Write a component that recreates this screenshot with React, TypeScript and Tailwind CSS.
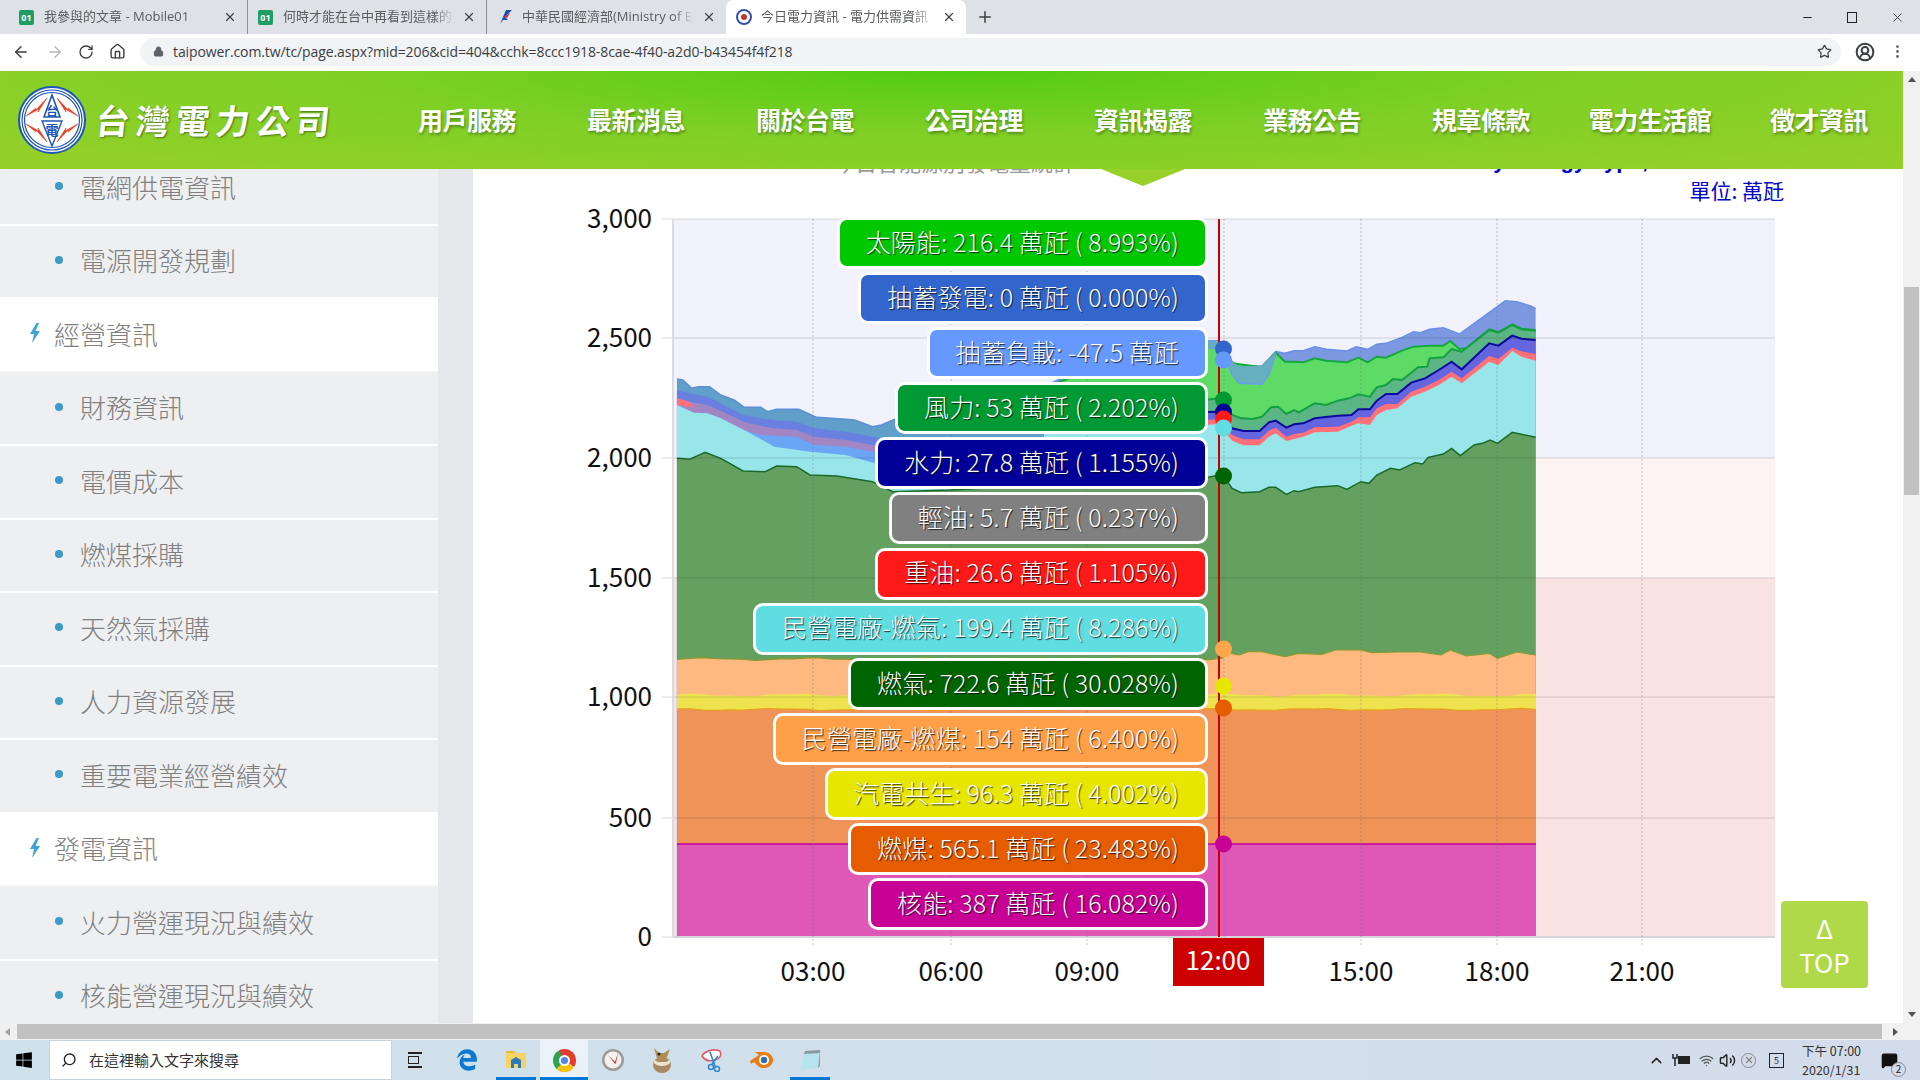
import React from 'react';
import { FaWindows, FaEdgeLegacy } from 'react-icons/fa';
import { ArrowLeft, ArrowRight, RotateCw, Home, Lock, Star, EllipsisVertical, CircleUserRound, X, Plus, Minus, Search, ChevronUp, Volume2, Wifi, MessageSquare } from 'lucide-react';

type Pts = number[][];

// coordinates read off the reference crops
const rx = (p: Pts): Pts => p.map(([x, y]) => [1200 + x / 2.178, 280 + y / 3]);
const lx = (p: Pts): Pts => p.map(([x, y]) => [560 + x / 2.24, 170 + y / 3]);
const wave = (base: number, amp: number, seed: number): Pts => {
  const out: Pts = [];
  for (let x = 677; x <= 1536; x += 13) {
    out.push([x, base + amp * Math.sin(x / 17 + seed) + (amp / 2) * Math.sin(x / 6 + seed)]);
  }
  out.push([1536, base]);
  return out;
};
const area = (p: Pts) => `M${p[0][0]},937 ` + p.map(([x, y]) => `L${x},${y}`).join(' ') + ` L${p[p.length - 1][0]},937 Z`;
const line = (p: Pts) => p.map(([x, y]) => `${x},${y}`).join(' ');

const leftTop = [...lx([[262, 627], [275, 630], [295, 655], [310, 650], [335, 650], [360, 675], [390, 690], [413, 712], [450, 712], [465, 725], [485, 718], [535, 718], [575, 742], [640, 748], [660, 750], [700, 770], [720, 765], [750, 748]]), [960, 415], [1044, 415]];
const left2 = [...lx([[262, 660], [290, 670], [330, 680], [360, 700], [410, 735], [450, 745], [480, 750], [530, 755], [570, 775], [640, 785], [700, 800], [760, 815], [980, 800]]), [1044, 440]];
const left3 = [...lx([[262, 685], [290, 695], [330, 705], [360, 722], [410, 755], [450, 768], [480, 775], [530, 780], [570, 800], [640, 810], [700, 825], [760, 835], [980, 805]]), [1044, 445]];
const left4 = [...lx([[262, 705], [300, 728], [330, 730], [360, 745], [410, 780], [450, 795], [480, 797], [530, 800], [570, 825], [640, 830], [700, 845], [760, 850], [980, 815]]), [1044, 450]];
const left5 = [...lx([[262, 705], [300, 728], [330, 730], [360, 745], [420, 785], [480, 830], [560, 845], [640, 855], [705, 880]]), [1044, 465]];

const topP = [[1044, 386], [1100, 362], [1150, 348], [1205, 341], ...rx([[18, 182], [40, 182], [70, 245], [85, 258], [135, 258], [165, 215], [185, 220], [205, 212], [225, 212], [250, 200], [275, 208], [320, 213], [340, 200], [365, 208], [385, 193], [405, 190], [440, 172], [465, 155], [480, 158], [500, 148], [530, 143], [565, 162], [665, 62], [690, 65], [720, 78], [731, 85]])];
const solar = [[1044, 388], [1100, 366], [1150, 352], [1205, 345], ...rx([[40, 192], [70, 250], [135, 262], [165, 218], [185, 245], [205, 245], [225, 247], [250, 235], [275, 242], [320, 247], [345, 233], [365, 247], [385, 230], [405, 233], [440, 212], [465, 200], [500, 197], [530, 197], [545, 183], [565, 207], [580, 205], [630, 148], [650, 156], [680, 133], [700, 146], [731, 150]])];
const pumpBottom = rx([[18, 205], [40, 205], [60, 245], [70, 285], [85, 310], [135, 313], [150, 285], [165, 222]]);
const pumpTop = rx([[18, 182], [40, 182], [70, 245], [85, 258], [135, 258], [165, 215]]);
const wind = [[1044, 426], [1205, 400], ...rx([[40, 355], [70, 405], [90, 415], [115, 417], [135, 410], [155, 382], [170, 380], [188, 402], [205, 390], [215, 397], [250, 370], [275, 375], [300, 362], [325, 355], [345, 343], [370, 350], [385, 322], [405, 315], [420, 297], [440, 300], [475, 262], [495, 260], [500, 235], [530, 232], [548, 207], [570, 215], [630, 150], [650, 158], [680, 135], [700, 148], [731, 152]])];
const hydro = [[1044, 428], [1205, 412], ...rx([[40, 395], [70, 445], [95, 453], [130, 453], [150, 427], [165, 422], [188, 443], [205, 433], [225, 430], [250, 415], [300, 407], [330, 405], [345, 388], [370, 388], [385, 362], [405, 342], [430, 342], [460, 308], [490, 295], [520, 270], [548, 245], [570, 268], [630, 190], [650, 197], [680, 167], [700, 176], [731, 180]])];
const oil = [[1044, 429], [1205, 420], ...rx([[40, 418], [70, 465], [95, 478], [130, 478], [150, 452], [165, 443], [188, 470], [205, 462], [225, 458], [250, 442], [300, 440], [330, 425], [345, 412], [370, 412], [385, 385], [405, 372], [430, 372], [460, 335], [490, 320], [520, 300], [548, 275], [570, 295], [630, 228], [650, 236], [680, 203], [700, 214], [731, 222]])];
const ippGas = [[1044, 430], [1205, 425], ...rx([[40, 432], [70, 482], [95, 496], [130, 496], [150, 470], [165, 460], [188, 483], [205, 477], [225, 470], [250, 457], [300, 455], [330, 437], [345, 430], [370, 435], [385, 405], [405, 390], [430, 385], [460, 350], [490, 335], [520, 315], [548, 290], [570, 310], [630, 245], [650, 255], [680, 213], [700, 230], [731, 242]])];
const gas = [...lx([[262, 865], [290, 868], [325, 847], [360, 865], [410, 903], [460, 905], [485, 888], [530, 890], [560, 915], [620, 918], [700, 935], [745, 965]]), [950, 490], [1040, 485], [1205, 478], ...rx([[40, 585], [60, 605], [70, 625], [90, 638], [130, 635], [150, 622], [165, 622], [188, 643], [205, 632], [215, 635], [250, 622], [300, 617], [320, 628], [350, 605], [368, 610], [385, 585], [415, 565], [435, 570], [468, 548], [485, 552], [497, 532], [530, 522], [548, 505], [567, 527], [597, 495], [615, 490], [632, 480], [648, 490], [680, 457], [731, 472]])];
const ippCoal = [...wave(659, 1, 1).filter((p) => p[0] < 1225), ...rx([[50, 1115], [85, 1125], [105, 1115], [135, 1115], [185, 1130], [215, 1120], [265, 1123], [295, 1110], [350, 1110], [375, 1118], [430, 1116], [480, 1116], [525, 1125], [545, 1110], [580, 1128], [630, 1120], [648, 1135], [690, 1116], [731, 1125]])];

const tips = [
  { t: '太陽能: 216.4 萬瓩 ( 8.993%)', c: 'bg-[#00c800]' },
  { t: '抽蓄發電: 0 萬瓩 ( 0.000%)', c: 'bg-[#3366cc]' },
  { t: '抽蓄負載: -47.5 萬瓩', c: 'bg-[#6699ff]' },
  { t: '風力: 53 萬瓩 ( 2.202%)', c: 'bg-[#009933]' },
  { t: '水力: 27.8 萬瓩 ( 1.155%)', c: 'bg-[#000099]' },
  { t: '輕油: 5.7 萬瓩 ( 0.237%)', c: 'bg-[#808080]' },
  { t: '重油: 26.6 萬瓩 ( 1.105%)', c: 'bg-[#ff1a1a]' },
  { t: '民營電廠-燃氣: 199.4 萬瓩 ( 8.286%)', c: 'bg-[#5fdde0]' },
  { t: '燃氣: 722.6 萬瓩 ( 30.028%)', c: 'bg-[#006400]' },
  { t: '民營電廠-燃煤: 154 萬瓩 ( 6.400%)', c: 'bg-[#ff9f47]' },
  { t: '汽電共生: 96.3 萬瓩 ( 4.002%)', c: 'bg-[#e6e600]' },
  { t: '燃煤: 565.1 萬瓩 ( 23.483%)', c: 'bg-[#e65c00]' },
  { t: '核能: 387 萬瓩 ( 16.082%)', c: 'bg-[#c70096]' }
];

const dots = [
  [349, '#3366cc'], [360, '#6699ff'], [400, '#009933'], [412, '#000099'], [419, '#ff1a1a'], [428, '#5fdde0'],
  [476, '#006400'], [649, '#ffa64d'], [686, '#e6e600'], [708, '#e65c00'], [844, '#c70096']
] as [number, string][];

const yTicks = [[3000, '3,000', 219], [2500, '2,500', 338], [2000, '2,000', 458], [1500, '1,500', 578], [1000, '1,000', 697], [500, '500', 818], [0, '0', 937]] as [number, string, number][];
const xTicks = [[813, '03:00'], [951, '06:00'], [1087, '09:00'], [1361, '15:00'], [1497, '18:00'], [1642, '21:00']] as [number, string][];

const menu = [
  { t: '電網供電資訊' }, { t: '電源開發規劃' }, { t: '經營資訊', top: true }, { t: '財務資訊' }, { t: '電價成本' }, { t: '燃煤採購' },
  { t: '天然氣採購' }, { t: '人力資源發展' }, { t: '重要電業經營績效' }, { t: '發電資訊', top: true }, { t: '火力營運現況與績效' }, { t: '核能營運現況與績效' }
];

const nav = ['用戶服務', '最新消息', '關於台電', '公司治理', '資訊揭露', '業務公告', '規章條款', '電力生活館', '徵才資訊'];

function Mobile01Icon() {
  return (
    <span className="flex h-[15px] w-[15px] flex-none items-center justify-center rounded-[2px] bg-[#1f9d63] text-[9px] font-bold leading-none text-white">01</span>
  );
}

function Tab({ icon, title, active, last }: { icon: React.ReactNode; title: string; active?: boolean; last?: boolean }) {
  return (
    <div className={active ? 'flex h-[34px] w-[240px] items-center rounded-t-[8px] bg-white pl-[10px] pr-[10px]' : last ? 'flex h-[34px] w-[239px] items-center pl-[10px] pr-[10px]' : 'flex h-[34px] w-[239px] items-center border-r border-[#8f9296] pl-[10px] pr-[10px]'}>
      <span className="flex w-[25px] flex-none items-center">{icon}</span>
      <span className="min-w-0 flex-1 overflow-hidden whitespace-nowrap text-[13px] text-[#5a5c60] [mask-image:linear-gradient(to_right,black_88%,transparent)]">{title}</span>
      <X size={14} strokeWidth={2} className="ml-[8px] flex-none text-[#3c4043]" />
    </div>
  );
}

function Logo() {
  return (
    <svg width="68" height="68" viewBox="0 0 68 68" className="flex-none">
      <circle cx="34" cy="34" r="33" fill="#fff" stroke="#1d55b8" strokeWidth="2" />
      <circle cx="34" cy="34" r="30" fill="none" stroke="#1d55b8" strokeWidth="1.2" />
      <circle cx="34" cy="34" r="27.5" fill="none" stroke="#1d55b8" strokeWidth="1.2" />
      <path d="M8 30l10-8-1 3 12-13-9 14 1-3zM60 30l-10-8 1 3-12-13 9 14-1-3zM8 38l10 8-1-3 12 13-9-14 1 3zM60 38l-10 8 1-3-12 13 9-14-1 3z" fill="#ea3a1e" stroke="#ea3a1e" strokeWidth="0.6" />
      <path d="M34 9l-8 22h16z" fill="none" stroke="#1d55b8" strokeWidth="1.6" />
      <text x="34" y="30" textAnchor="middle" fontSize="12" fontWeight="700" fill="#1d55b8">台</text>
      <path d="M24 35h20l-10 25z" fill="#fff" stroke="#1d55b8" strokeWidth="1.4" />
      <text x="34" y="49" textAnchor="middle" fontSize="13" fontWeight="700" fill="#1d55b8">電</text>
    </svg>
  );
}

function Chart() {
  return (
    <svg width="1430" height="854" viewBox="473 169 1430 854" className="block font-['Noto_Sans_CJK_TC','Liberation_Sans',sans-serif]">
      <rect x="673" y="219" width="1102" height="239" fill="#f1f2fb" />
      <rect x="673" y="458" width="1102" height="120" fill="#fdf3f3" />
      <rect x="673" y="578" width="1102" height="359" fill="#f9e3e3" />

      <path d={area(leftTop)} fill="#5f9fca" />
      <polyline points={line(leftTop)} fill="none" stroke="#5b8fd8" strokeWidth="1.5" />
      <path d={area(left2)} fill="#6a80e0" />
      <path d={area(left3)} fill="#a286c4" />
      <path d={area(lx([[262, 685], [290, 695], [300, 712], [262, 705]]))} fill="#ff7078" />
      <path d={area(left4)} fill="#6ba5f5" />
      <path d={area(left5)} fill="#98e6ea" />

      <path d={area(topP)} fill="#7b98e0" />
      <polyline points={line(topP)} fill="none" stroke="#6a8fe6" strokeWidth="1.5" />
      <path d={area(solar)} fill="#5edb66" />
      <polyline points={line(solar)} fill="none" stroke="#16a83e" strokeWidth="2" />
      <polygon points={line([...pumpTop, ...[...pumpBottom].reverse()])} fill="#66afc0" />
      <polyline points={line(pumpBottom)} fill="none" stroke="#6a9fe8" strokeWidth="1.5" />
      <path d={area(wind)} fill="#5cb585" />
      <polyline points={line(wind)} fill="none" stroke="#12a040" strokeWidth="2" />
      <path d={area(hydro)} fill="#6565e0" />
      <polyline points={line(hydro)} fill="none" stroke="#0a0a9a" strokeWidth="2" />
      <path d={area(oil)} fill="#ff7078" />
      <path d={area(ippGas)} fill="#98e6ea" />

      <path d={area(gas)} fill="#64a060" />
      <polyline points={line(gas)} fill="none" stroke="#1a6a2a" strokeWidth="1.5" />
      <path d={area(ippCoal)} fill="#fdb97f" />
      <polyline points={line(ippCoal)} fill="none" stroke="#8a9a30" strokeWidth="1.2" />
      <path d={area(wave(695, 1.2, 2))} fill="#eee34f" />
      <path d={area(wave(709.5, 0.8, 3))} fill="#ef9358" />
      <polyline points={line(wave(709.5, 0.8, 3))} fill="none" stroke="#e8a020" strokeWidth="1.2" />
      <rect x="677" y="844" width="859" height="93" fill="#e058b6" />
      <line x1="677" y1="844" x2="1536" y2="844" stroke="#c000a0" strokeWidth="1.5" />

      {yTicks.map(([v, label, y]) => (
        <g key={v}>
          <line x1="662" y1={y} x2="1775" y2={y} stroke="#000" strokeOpacity="0.07" strokeWidth="2" />
          <text x="652" y={y + 9} textAnchor="end" fontSize="26" fill="#111">{label}</text>
        </g>
      ))}
      <line x1="673" y1="219" x2="673" y2="937" stroke="#dcdce0" strokeWidth="2" />
      <line x1="673" y1="937" x2="1775" y2="937" stroke="#d6d6da" strokeWidth="2" />
      {[813, 951, 1087, 1224, 1361, 1497, 1642].map((x) => (
        <line key={x} x1={x} y1="219" x2={x} y2="945" stroke="#6b6b80" strokeOpacity="0.4" strokeWidth="1" strokeDasharray="2 2" />
      ))}
      {xTicks.map(([x, label]) => (
        <text key={x} x={x} y="981" textAnchor="middle" fontSize="26" fill="#111">{label}</text>
      ))}

      <line x1="1219" y1="219" x2="1219" y2="937" stroke="#c40000" strokeWidth="2" />
      {dots.map(([y, c]) => (
        <circle key={y} cx="1223.5" cy={y} r="8.5" fill={c} />
      ))}
      <rect x="1173" y="938" width="91" height="48" fill="#cc0000" />
      <text x="1218" y="970" textAnchor="middle" fontSize="26" fill="#fff">12:00</text>
    </svg>
  );
}

export default function App() {
  return (
    <div className="flex h-screen w-screen flex-col overflow-hidden bg-white font-['Noto_Sans_CJK_TC','Liberation_Sans',sans-serif]">
      {/* browser tabs */}
      <div className="relative flex h-[34px] flex-none items-end bg-[#dee1e6] pl-[9px] font-['Open_Sans','Noto_Sans_CJK_TC',sans-serif]">
        <Tab icon={<Mobile01Icon />} title="我參與的文章 - Mobile01" />
        <Tab icon={<Mobile01Icon />} title="何時才能在台中再看到這樣的藍天" />
        <Tab
          icon={
            <svg width="16" height="16" viewBox="0 0 16 16">
              <path d="M3 15L9 1h6L8 8l3 3H6z" fill="#1a4fb0" />
              <path d="M7 8l6-4-3 5z" fill="#e0262b" />
            </svg>
          }
          title="中華民國經濟部(Ministry of Economic"
          last
        />
        <Tab
          icon={
            <svg width="16" height="16" viewBox="0 0 16 16">
              <circle cx="8" cy="8" r="7" fill="#fff" stroke="#3a4fa8" strokeWidth="2" />
              <circle cx="8" cy="8" r="3" fill="#c0392b" />
            </svg>
          }
          title="今日電力資訊 - 電力供需資訊 - 台灣電力公司"
          active
        />
        <Plus size={18} className="ml-[10px] mb-[8px] text-[#3c4043]" />
        <div className="ml-auto flex h-[34px] items-center">
          <Minus size={13} className="mr-[33px] text-[#222]" />
          <span className="mr-[33px] h-[11px] w-[10px] border border-[#222]" />
          <X size={15} strokeWidth={1.2} className="mr-[15px] text-[#222]" />
        </div>
      </div>

      {/* browser toolbar */}
      <div className="flex h-[37px] flex-none items-center bg-white pb-[2px] font-['Open_Sans','Noto_Sans_CJK_TC',sans-serif]">
        <ArrowLeft size={18} strokeWidth={2} className="ml-[12px] text-[#3c4043]" />
        <ArrowRight size={18} strokeWidth={2} className="ml-[16px] text-[#b4b7bb]" />
        <RotateCw size={16} strokeWidth={2} className="ml-[14px] text-[#3c4043]" />
        <Home size={17} strokeWidth={2} className="ml-[15px] text-[#3c4043]" />
        <div className="ml-[14px] flex h-[28px] w-[1701px] items-center rounded-full bg-[#f1f3f4] pl-[13px] pr-[9px]">
          <Lock size={11} fill="#5f6368" className="text-[#5f6368]" />
          <span className="ml-[9px] whitespace-nowrap text-[14px] tracking-[-0.1px] text-[#3c4043]">taipower.com.tw/tc/page.aspx?mid=206&amp;cid=404&amp;cchk=8ccc1918-8cae-4f40-a2d0-b43454f4f218</span>
          <Star size={15} className="ml-auto text-[#3c4043]" />
        </div>
        <CircleUserRound size={20} strokeWidth={2.4} className="ml-[14px] text-[#3c4043]" />
        <EllipsisVertical size={17} className="ml-[14px] text-[#5f6368]" />
      </div>

      <div className="flex min-h-0 flex-1">
        <div className="flex min-w-0 flex-1 flex-col">
          {/* site header */}
          <div className="relative z-10 flex h-[98px] flex-none items-center bg-[radial-gradient(ellipse_at_50%_0%,#52cc14_0%,#7fd026_45%,#96d028_100%)]">
            <div className="flex w-[382.5px] flex-none items-center pl-[18px]">
              <Logo />
              <span className="ml-[10px] -skew-x-6 whitespace-nowrap text-[34px] font-bold leading-none tracking-[6px] text-white [text-shadow:1px_1px_2px_rgba(0,0,0,0.45)]">台灣電力公司</span>
            </div>
            <div className="grid grid-cols-[repeat(9,169px)]">
              {nav.map((n, i) => (
                <div key={n} className="relative flex justify-center whitespace-nowrap text-[25px] font-bold tracking-[-0.5px] text-white [text-shadow:1px_2px_3px_rgba(0,0,0,0.35)]">
                  {n}
                  {i === 4 && <span className="absolute left-1/2 top-[calc(100%+30px)] h-0 w-0 -translate-x-1/2 border-x-[42px] border-t-[17px] border-x-transparent border-t-[#98d02a]" />}
                </div>
              ))}
            </div>
          </div>

          <div className="flex min-h-0 flex-1">
            {/* side menu */}
            <div className="w-[438px] flex-none overflow-hidden bg-[#eeeff0]">
              <div className="-mt-[17px]">
                {menu.map((m) =>
                  m.top ? (
                    <div key={m.t} className="flex h-[73.5px] items-center border-b-[2px] border-[#f4f4f5] bg-white pb-[3px] pl-[29px] text-[26px] font-light text-[#808080]">
                      <svg width="12" height="20" viewBox="0 0 12 20" className="flex-none">
                        <path d="M7.5 0L1 11h4L3 20l8-12H6.500L10 0z" fill="#3ba3d8" />
                      </svg>
                      <span className="ml-[13px]">{m.t}</span>
                    </div>
                  ) : (
                    <div key={m.t} className="flex h-[73.5px] items-center border-b-[2px] border-white pb-[3px] pl-[55px] text-[26px] font-light text-[#808080]">
                      <span className="h-[8px] w-[8px] flex-none rounded-full bg-[#3b9ac9]" />
                      <span className="ml-[17px] whitespace-nowrap">{m.t}</span>
                    </div>
                  )
                )}
              </div>
            </div>
            <div className="w-[35px] flex-none bg-[#e6e7ea]" />

            {/* chart panel */}
            <div className="relative min-w-0 flex-1 overflow-hidden">
              <div className="-mt-[19px] flex h-[22px] items-center justify-between whitespace-nowrap pl-[360px] pr-[255px] text-[22px] leading-none">
                <span className="text-[#999]">今日各能源別發電量統計</span>
                <span className="font-['Liberation_Sans',sans-serif] font-bold text-[#0000cc]">by Energy Type,</span>
              </div>
              <div className="absolute left-0 top-0">
                <Chart />
              </div>
              <div className="absolute right-[119px] top-[6px] text-[21px] text-[#0000cc]">單位: 萬瓩</div>
              <div className="absolute right-[695px] top-[48px] flex flex-col items-end gap-[3.1px]">
                {tips.map((tip) => (
                  <div key={tip.t} className={`flex h-[52px] items-center whitespace-nowrap rounded-[10px] border-[3px] border-white px-[26px] pb-[3px] text-[25px] font-light tracking-[0.1px] text-white [text-shadow:1px_1px_1px_rgba(0,0,0,0.75)] ${tip.c}`}>
                    {tip.t}
                  </div>
                ))}
              </div>
              <div className="absolute left-[1308px] top-[732px] flex h-[87px] w-[87px] flex-col items-center justify-center rounded-[4px] bg-[#b0d94a] text-[26px] leading-[34px] text-white">
                <span>Δ</span>
                <span>TOP</span>
              </div>
            </div>
          </div>
        </div>

        {/* vertical scrollbar */}
        <div className="flex w-[17px] flex-none flex-col items-center bg-[#f1f1f1]">
          <span className="mt-[6px] h-0 w-0 border-x-[4px] border-b-[5px] border-x-transparent border-b-[#505050]" />
          <div className="mt-[205px] h-[208px] w-[15px] bg-[#c1c1c1]" />
          <span className="mb-[6px] mt-auto h-0 w-0 border-x-[4px] border-t-[5px] border-x-transparent border-t-[#505050]" />
        </div>
      </div>

      {/* horizontal scrollbar */}
      <div className="flex h-[17px] flex-none items-center bg-[#f1f1f1]">
        <span className="ml-[5px] h-0 w-0 border-y-[4px] border-r-[5px] border-y-transparent border-r-[#a0a0a0]" />
        <div className="ml-[7px] h-[15px] w-[1865px] bg-[#c1c1c1]" />
        <span className="ml-[11px] h-0 w-0 border-y-[4px] border-l-[5px] border-y-transparent border-l-[#505050]" />
      </div>

      {/* windows taskbar */}
      <div className="flex h-[40px] flex-none items-center bg-gradient-to-r from-[#cfe2ec] to-[#d3dcea] font-['Noto_Sans_CJK_TC',sans-serif] text-[#222]">
        <FaWindows size={18} className="ml-[15px] flex-none text-black" />
        <div className="ml-[16px] flex h-[40px] w-[343px] flex-none items-center border border-[#c9d3da] bg-white pl-[11px] text-[15px] text-[#333]">
          <Search size={16} className="-scale-x-100 text-[#222]" />
          <span className="ml-[12px]">在這裡輸入文字來搜尋</span>
        </div>
        <div className="ml-[16px] flex h-[16px] w-[16px] flex-none flex-col justify-between">
          <span className="h-[2px] w-[14px] bg-[#222]" />
          <span className="h-[8px] w-[11px] border border-[#222]" />
          <span className="h-[2px] w-[14px] bg-[#222]" />
        </div>
        <div className="ml-[18px] flex h-[40px] w-[49px] flex-none items-center justify-center">
          <FaEdgeLegacy size={22} className="text-[#0c78d0]" />
        </div>
        <div className="flex h-[40px] w-[49px] flex-none justify-center">
          <div className="flex w-[40px] items-center justify-center border-b-[3px] border-[#0078d7] pt-[3px]">
            <svg width="22" height="20" viewBox="0 0 22 20">
              <path d="M1 1h8l2 2H1z" fill="#e8b83a" />
              <path d="M1 3h20v15H1z" fill="#f6d365" />
              <path d="M6 10l5-3 5 3v8h-3v-4H9v4H6z" fill="#2a7bb8" />
            </svg>
          </div>
        </div>
        <div className="flex h-[40px] w-[48px] flex-none items-center justify-center border-b-[3px] border-[#0078d7] bg-[#e8f2f8] pt-[3px]">
          <span className="flex h-[23px] w-[23px] items-center justify-center rounded-full bg-[conic-gradient(#e33b2e_0_34%,#f4c20d_34%_62%,#30a14e_62%_92%,#e33b2e_92%_100%)]">
            <span className="h-[11px] w-[11px] rounded-full border-2 border-white bg-[#4f87ec]" />
          </span>
        </div>
        <div className="flex h-[40px] w-[49px] flex-none items-center justify-center">
          <svg width="24" height="24" viewBox="0 0 24 24">
            <circle cx="12" cy="12" r="11" fill="#9a9a9a" />
            <circle cx="12" cy="12" r="8.500" fill="#f4f0ee" />
            <path d="M7 7l7 9 1-1zM17 5l-3 9 1 1z" fill="#c33c3c" />
          </svg>
        </div>
        <div className="flex h-[40px] w-[50px] flex-none items-center justify-center">
          <svg width="24" height="26" viewBox="0 0 24 26">
            <ellipse cx="12" cy="18" rx="9" ry="8" fill="#a98a64" />
            <path d="M4 16c3 4 13 4 16 0v-3l-4 2H8l-4-2z" fill="#ece2cf" />
            <path d="M4 1l5 5h5l6-4-3 8-4 5-5-1-2-6z" fill="#b08d52" />
            <circle cx="9" cy="7" r="1.500" fill="#222" />
          </svg>
        </div>
        <div className="flex h-[40px] w-[49px] flex-none items-center justify-center">
          <svg width="26" height="24" viewBox="0 0 26 24" fill="none">
            <path d="M3 8c2-4 10-8 18-5 2 4 0 8-5 9-4 1-9 2-13-4z" fill="#fff" stroke="#d8606e" strokeWidth="1.6" />
            <path d="M11 4l5 14M19 8l-6 8" stroke="#2f86c8" strokeWidth="1.6" />
            <circle cx="12" cy="19" r="2.500" stroke="#2f86c8" strokeWidth="1.500" />
            <circle cx="18" cy="21" r="2.500" stroke="#2f86c8" strokeWidth="1.500" />
          </svg>
        </div>
        <div className="flex h-[40px] w-[49px] flex-none items-center justify-center">
          <svg width="24" height="20" viewBox="0 0 24 20">
            <path d="M1 11l9-6L6 2h9a9 8 0 1 1-7 13l-3-3-3 2z" fill="#ea7a14" />
            <circle cx="15" cy="10" r="5" fill="#fff" />
            <circle cx="15" cy="10" r="3.200" fill="#2a6fa8" />
          </svg>
        </div>
        <div className="flex h-[40px] w-[49px] flex-none justify-center">
          <div className="flex w-[40px] items-center justify-center border-b-[3px] border-[#0078d7] pt-[3px]">
            <svg width="24" height="24" viewBox="0 0 24 24">
              <path d="M7 3l15-1-2 18-18 2z" fill="#b6e3ee" />
              <path d="M7 3l15-1v3L6 6z" fill="#8a9aa0" />
              <path d="M22 2l-2 18 2-2z" fill="#8aa0a8" />
            </svg>
          </div>
        </div>

        <div className="ml-auto flex items-center">
          <ChevronUp size={17} className="text-[#222]" />
          <svg width="18" height="14" viewBox="0 0 18 14" className="ml-[7px]">
            <rect x="6" y="3" width="12" height="8" fill="#222" />
            <path d="M1 1v4h4V1M3 5v8" fill="none" stroke="#222" strokeWidth="1.5" />
          </svg>
          <Wifi size={15} className="ml-[9px] text-[#555]" />
          <Volume2 size={17} className="ml-[5px] text-[#222]" />
          <span className="ml-[5px] flex h-[15px] w-[15px] items-center justify-center rounded-full border border-[#888] text-[#888]">
            <X size={10} strokeWidth={3} />
          </span>
          <span className="ml-[13px] flex h-[15px] w-[15px] items-center justify-center border border-[#222] text-[9px] leading-none">5</span>
          <div className="ml-[18px] w-[66px] text-left text-[12.5px] leading-[19px] text-[#333]">
            <div>下午 07:00</div>
            <div>2020/1/31</div>
          </div>
          <div className="relative ml-[13px] mr-[22px]">
            <MessageSquare size={17} fill="#111" className="text-[#111]" />
            <span className="absolute -bottom-[8px] -right-[8px] flex h-[15px] w-[15px] items-center justify-center rounded-full border border-[#888] bg-[#d3dcea] text-[10px] leading-none">2</span>
          </div>
        </div>
      </div>
    </div>
  );
}
